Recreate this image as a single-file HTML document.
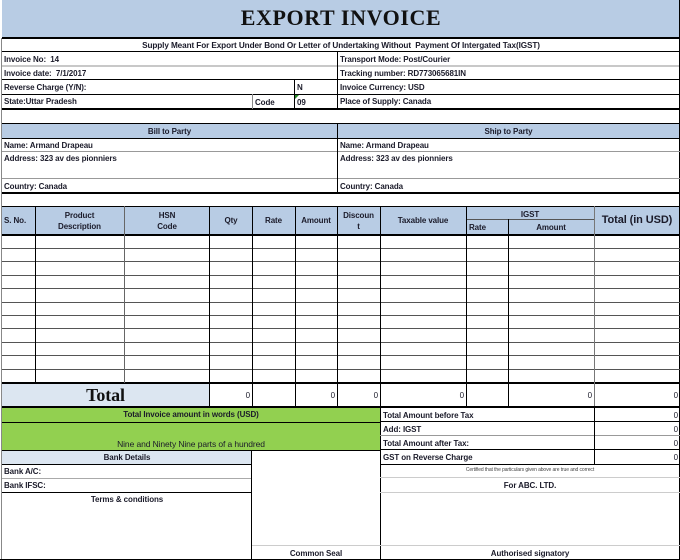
<!DOCTYPE html>
<html><head><meta charset="utf-8"><style>
*{margin:0;padding:0;box-sizing:border-box}
body{width:680px;height:560px;background:#fff;position:relative;overflow:hidden;font-family:"Liberation Sans",Arial,sans-serif;font-size:8px;color:#1b1b2a}
.c{position:absolute;white-space:nowrap;overflow:hidden}
.hl{position:absolute;height:1px;background:#000}
.vl{position:absolute;width:1px;background:#000}
.hg{position:absolute;height:2px;background:#c8c8c8}
.t{position:absolute;white-space:nowrap;font-size:8px;letter-spacing:-0.1px}
.b{font-weight:bold}
.ctr{text-align:center}
.r{text-align:right}
</style></head><body>
<div class="c" style="left:2px;top:0;width:678px;height:38px;background:#b8cce4;border-right:1px solid #000"></div>
<div class="t ctr" style="left:2px;top:5px;width:678px;font-family:'Liberation Serif',serif;font-weight:bold;font-size:22px;letter-spacing:0.6px;color:#111">EXPORT INVOICE</div>
<div class="hl" style="left:2px;top:37px;width:678px;height:2px"></div>
<div class="t b ctr" style="left:2px;top:41px;width:678px;font-size:8.2px">Supply Meant For Export Under Bond Or Letter of Undertaking Without &nbsp;Payment Of Intergated Tax(IGST)</div>
<div class="hl" style="left:2px;top:51px;width:678px"></div>
<div class="hg" style="left:2px;top:65px;width:678px"></div>
<div class="hl" style="left:2px;top:79px;width:678px"></div>
<div class="hl" style="left:2px;top:94px;width:678px"></div>
<div class="hl" style="left:2px;top:108px;width:678px;height:2px"></div>
<div class="vl" style="left:337px;top:51px;height:58px"></div>
<div class="vl" style="left:679px;top:38px;height:522px"></div>
<div class="vl" style="left:1px;top:38px;height:522px;background:#888"></div>
<div class="vl" style="left:294px;top:79px;height:30px"></div>
<div class="vl" style="left:252px;top:94px;height:15px;background:#888"></div>
<div class="t b" style="left:4px;top:55px">Invoice No: &nbsp;14</div>
<div class="t b" style="left:4px;top:69px">Invoice date: &nbsp;7/1/2017</div>
<div class="t b" style="left:4px;top:83px">Reverse Charge (Y/N):</div>
<div class="t b" style="left:4px;top:97px">State:Uttar Pradesh</div>
<div class="t b" style="left:297px;top:83px">N</div>
<div class="t b" style="left:255px;top:98px">Code</div>
<div class="t b" style="left:297px;top:98px">09</div>
<div style="position:absolute;left:295px;top:95px;width:0;height:0;border-top:4px solid #2a8a2a;border-right:4px solid transparent"></div>
<div class="t b" style="left:340px;top:55px">Transport Mode: Post/Courier</div>
<div class="t b" style="left:340px;top:69px">Tracking number: RD773065681IN</div>
<div class="t b" style="left:340px;top:83px">Invoice Currency: USD</div>
<div class="t b" style="left:340px;top:97px">Place of Supply: Canada</div>
<div class="hl" style="left:2px;top:123px;width:678px"></div>
<div class="c" style="left:2px;top:124px;width:677px;height:14px;background:#b8cce4"></div>
<div class="hl" style="left:2px;top:138px;width:678px"></div>
<div class="t b ctr" style="left:2px;top:127px;width:335px">Bill to Party</div>
<div class="t b ctr" style="left:338px;top:127px;width:341px">Ship to Party</div>
<div class="hg" style="left:2px;top:151px;width:678px;height:1px;background:#999"></div>
<div class="hg" style="left:2px;top:178px;width:678px;height:1px;background:#999"></div>
<div class="hl" style="left:2px;top:192px;width:678px;height:2px"></div>
<div class="vl" style="left:337px;top:123px;height:70px"></div>
<div class="t b" style="left:4px;top:141px">Name: Armand Drapeau</div>
<div class="t b" style="left:4px;top:154px">Address: 323 av des pionniers</div>
<div class="t b" style="left:4px;top:182px">Country: Canada</div>
<div class="t b" style="left:340px;top:141px">Name: Armand Drapeau</div>
<div class="t b" style="left:340px;top:154px">Address: 323 av des pionniers</div>
<div class="t b" style="left:340px;top:182px">Country: Canada</div>
<div class="hl" style="left:2px;top:206px;width:678px"></div>
<div class="c" style="left:2px;top:207px;width:677px;height:27px;background:#b8cce4"></div>
<div class="hl" style="left:2px;top:234px;width:678px;height:2px"></div>
<div class="hl" style="left:466px;top:219px;width:128px;background:#555"></div>
<div class="t b" style="left:4px;top:216px">S. No.</div>
<div class="t b ctr" style="left:35px;top:210px;width:89px;line-height:11px;white-space:normal">Product<br>Description</div>
<div class="t b ctr" style="left:124px;top:210px;width:86px;line-height:11px">HSN<br>Code</div>
<div class="t b ctr" style="left:210px;top:216px;width:42px">Qty</div>
<div class="t b ctr" style="left:252px;top:216px;width:43px">Rate</div>
<div class="t b ctr" style="left:295px;top:216px;width:42px">Amount</div>
<div class="t b ctr" style="left:337px;top:210px;width:43px;line-height:11px">Discoun<br>t</div>
<div class="t b ctr" style="left:380px;top:216px;width:86px">Taxable value</div>
<div class="t b ctr" style="left:466px;top:210px;width:128px">IGST</div>
<div class="t b" style="left:469px;top:223px">Rate</div>
<div class="t b ctr" style="left:508px;top:223px;width:86px">Amount</div>
<div class="t b ctr" style="left:594px;top:214px;width:86px;font-size:11px">Total (in USD)</div>
<div class="hl" style="left:2px;top:248px;width:678px;background:#555"></div>
<div class="hl" style="left:2px;top:261px;width:678px;background:#555"></div>
<div class="hl" style="left:2px;top:275px;width:678px;background:#555"></div>
<div class="hl" style="left:2px;top:288px;width:678px;background:#555"></div>
<div class="hl" style="left:2px;top:302px;width:678px;background:#555"></div>
<div class="hl" style="left:2px;top:315px;width:678px;background:#555"></div>
<div class="hl" style="left:2px;top:328px;width:678px;background:#555"></div>
<div class="hl" style="left:2px;top:342px;width:678px;background:#555"></div>
<div class="hl" style="left:2px;top:355px;width:678px;background:#555"></div>
<div class="hl" style="left:2px;top:369px;width:678px;background:#555"></div>
<div class="hl" style="left:2px;top:382px;width:678px;height:2px"></div>
<div class="vl" style="left:35px;top:206px;height:177px"></div>
<div class="vl" style="left:124px;top:206px;height:177px;background:#666"></div>
<div class="vl" style="left:209px;top:206px;height:201px"></div>
<div class="vl" style="left:252px;top:206px;height:201px"></div>
<div class="vl" style="left:295px;top:206px;height:201px"></div>
<div class="vl" style="left:337px;top:206px;height:201px"></div>
<div class="vl" style="left:380px;top:206px;height:201px"></div>
<div class="vl" style="left:466px;top:206px;height:201px"></div>
<div class="vl" style="left:508px;top:219px;height:188px"></div>
<div class="vl" style="left:594px;top:206px;height:201px;background:#777"></div>
<div class="c" style="left:2px;top:384px;width:207px;height:23px;background:#dce6f1"></div>
<div class="t ctr" style="left:2px;top:385px;width:207px;font-family:'Liberation Serif',serif;font-weight:bold;font-size:18px;color:#111">Total</div>
<div class="t r" style="left:210px;top:391px;width:40px">0</div>
<div class="t r" style="left:296px;top:391px;width:39px">0</div>
<div class="t r" style="left:338px;top:391px;width:40px">0</div>
<div class="t r" style="left:381px;top:391px;width:83px">0</div>
<div class="t r" style="left:509px;top:391px;width:83px">0</div>
<div class="t r" style="left:595px;top:391px;width:83px">0</div>
<div class="hl" style="left:2px;top:406px;width:678px;height:2px"></div>
<div class="c" style="left:2px;top:408px;width:378px;height:42px;background:#92d050"></div>
<div class="hl" style="left:2px;top:422px;width:378px"></div>
<div class="t b ctr" style="left:2px;top:410px;width:378px">Total Invoice amount in words (USD)</div>
<div class="t ctr" style="left:2px;top:439px;width:378px;font-size:8.5px">Nine and Ninety Nine parts of a hundred</div>
<div class="vl" style="left:380px;top:407px;height:153px"></div>
<div class="hl" style="left:380px;top:421px;width:300px"></div>
<div class="hl" style="left:380px;top:435px;width:300px;background:#999"></div>
<div class="hl" style="left:380px;top:449px;width:300px"></div>
<div class="hl" style="left:380px;top:464px;width:300px"></div>
<div class="hl" style="left:380px;top:477px;width:300px;background:#ccc"></div>
<div class="hl" style="left:380px;top:492px;width:300px;background:#ccc"></div>
<div class="hl" style="left:380px;top:545px;width:300px;background:#ccc"></div>
<div class="vl" style="left:594px;top:407px;height:57px"></div>
<div class="t b" style="left:383px;top:411px">Total Amount before Tax</div>
<div class="t b" style="left:383px;top:425px">Add: IGST</div>
<div class="t b" style="left:383px;top:439px">Total Amount after Tax:</div>
<div class="t b" style="left:383px;top:453px">GST on Reverse Charge</div>
<div class="t r" style="left:595px;top:411px;width:83px">0</div>
<div class="t r" style="left:595px;top:425px;width:83px">0</div>
<div class="t r" style="left:595px;top:439px;width:83px">0</div>
<div class="t r" style="left:595px;top:453px;width:83px">0</div>
<div class="t ctr" style="left:380px;top:467px;width:300px;font-size:5px;color:#444">Certified that the particulars given above are true and correct</div>
<div class="t b ctr" style="left:380px;top:481px;width:300px">For ABC. LTD.</div>
<div class="t b ctr" style="left:380px;top:549px;width:300px">Authorised signatory</div>
<div class="hl" style="left:2px;top:450px;width:378px"></div>
<div class="c" style="left:2px;top:451px;width:250px;height:13px;background:#dce6f1"></div>
<div class="t b ctr" style="left:2px;top:453px;width:250px">Bank Details</div>
<div class="hl" style="left:2px;top:464px;width:250px"></div>
<div class="hl" style="left:2px;top:478px;width:250px;background:#aaa"></div>
<div class="hl" style="left:2px;top:492px;width:250px"></div>
<div class="vl" style="left:251px;top:450px;height:110px"></div>
<div class="hl" style="left:252px;top:545px;width:128px;background:#ccc"></div>
<div class="t b" style="left:4px;top:467px">Bank A/C:</div>
<div class="t b" style="left:4px;top:481px">Bank IFSC:</div>
<div class="t b ctr" style="left:2px;top:495px;width:250px">Terms &amp; conditions</div>
<div class="t b ctr" style="left:252px;top:549px;width:128px">Common Seal</div>
<div class="hl" style="left:0;top:559px;width:680px"></div>
</body></html>
